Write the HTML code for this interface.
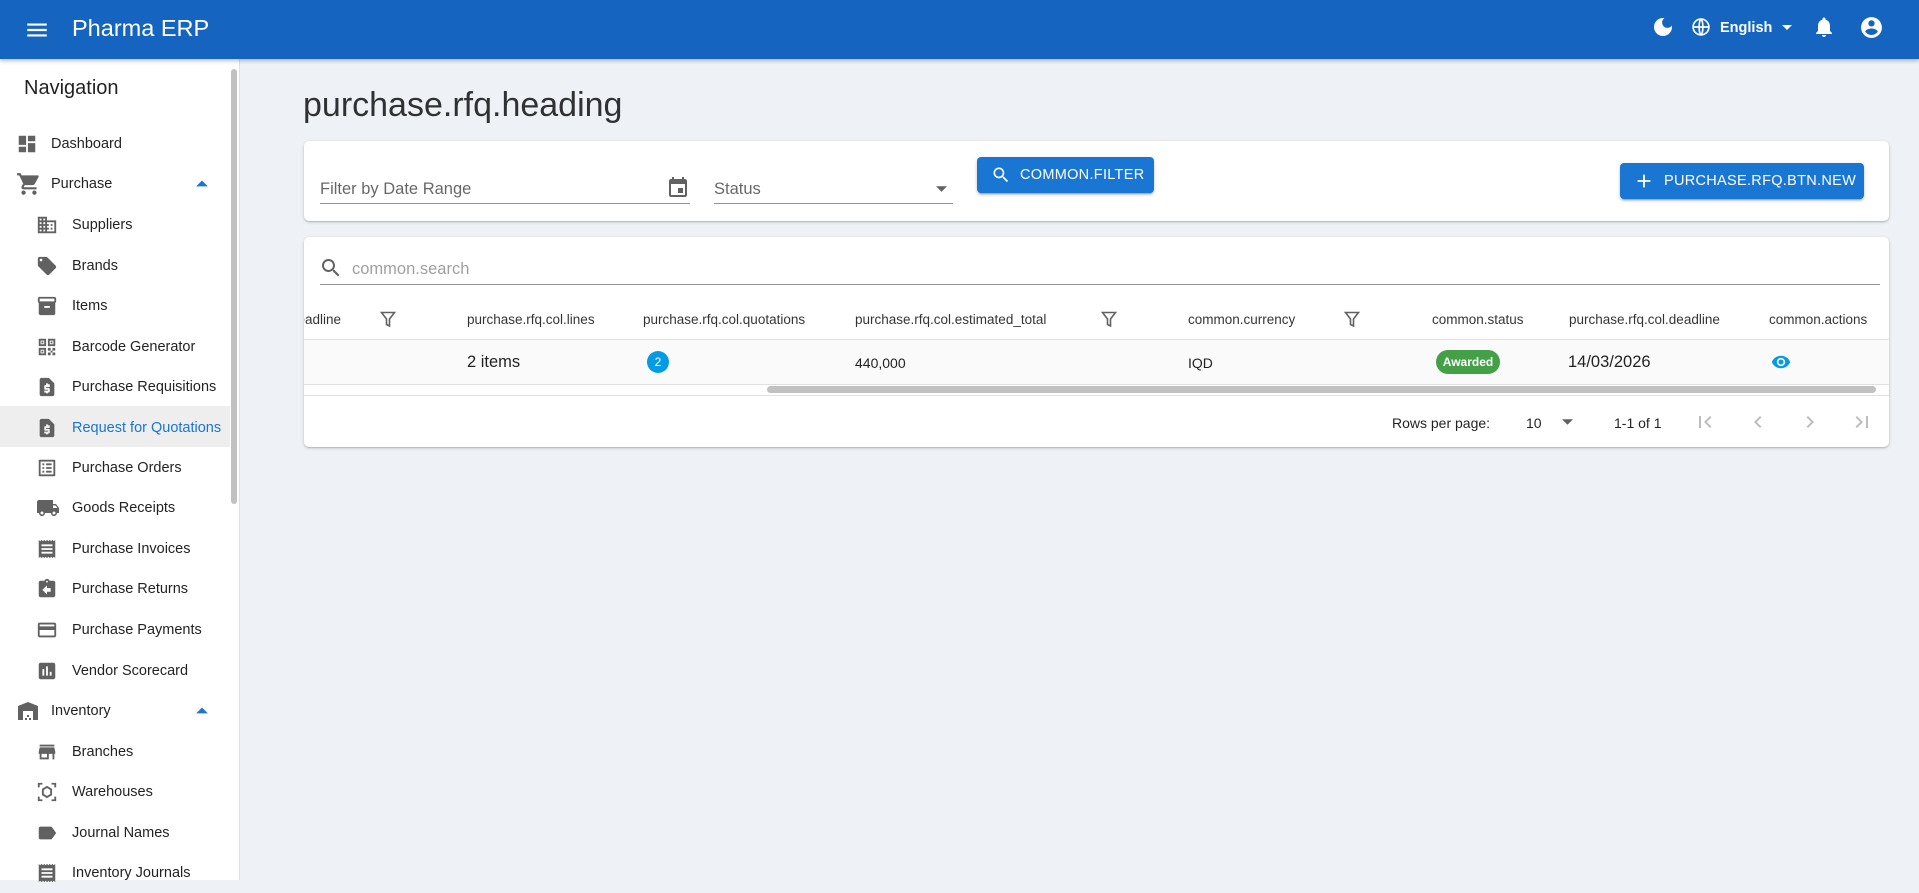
<!DOCTYPE html>
<html><head><meta charset="utf-8">
<style>
*{box-sizing:border-box;margin:0;padding:0}
body{width:1919px;height:880px;overflow:hidden;background:#eef2f7;font-family:"Liberation Sans",Arial,sans-serif;color:rgba(0,0,0,.87);position:relative}
.abs{position:absolute}
svg{display:block}
.bar{left:0;top:0;width:1919px;height:59px;background:#1565c0;box-shadow:0 2px 4px rgba(0,0,0,.25);z-index:5}
.side{left:0;top:59px;width:240px;height:821px;background:#fff;border-right:1px solid #e0e0e0}
.nav{position:absolute;left:0;width:230px;height:40px;display:flex;align-items:center;font-size:14.5px;color:rgba(0,0,0,.87)}
.nav svg{position:absolute;fill:#616161}
.nav span{top:12px}
.nav.top svg{left:16px}.nav.top span{position:absolute;left:51px}
.nav.sub svg{left:36px}.nav.sub span{position:absolute;left:72px}
.card{background:#fff;border-radius:5px;box-shadow:0 1px 3px rgba(0,0,0,.2),0 1px 1px rgba(0,0,0,.12)}
.th{font-size:13.5px;color:rgba(0,0,0,.8);top:312px;white-space:nowrap}
.btn{background:#1976d2;color:#fff;border-radius:4px;box-shadow:0 3px 1px -2px rgba(0,0,0,.2),0 2px 2px rgba(0,0,0,.14),0 1px 5px rgba(0,0,0,.12);font-size:14.5px;font-weight:500;letter-spacing:.3px;display:flex;align-items:center}
</style></head><body>

<div class="abs bar">
  <svg class="abs" style="left:24px;top:17px" width="26" height="26" viewBox="0 0 24 24" fill="#fff"><path d="M3 18h18v-2H3v2zm0-5h18v-2H3v2zm0-7v2h18V6H3z"/></svg>
  <div class="abs" style="left:72px;top:15px;font-size:23.5px;color:#fff">Pharma ERP</div>
  <svg class="abs" style="left:1651px;top:15px" width="24" height="24" viewBox="0 0 24 24" fill="#fff"><path d="M12 3c-4.97 0-9 4.03-9 9s4.03 9 9 9 9-4.030 9-9c0-.46-.04-.92-.1-1.36-.98 1.37-2.58 2.26-4.4 2.26-2.98 0-5.4-2.42-5.4-5.4 0-1.81.89-3.42 2.26-4.4-.44-.06-.9-.1-1.36-.1z"/></svg>
  <svg class="abs" style="left:1691px;top:17px" width="20" height="20" viewBox="0 0 24 24" fill="none" stroke="#fff" stroke-width="2"><circle cx="12" cy="12" r="9.5"/><path d="M2.5 12h19M12 2.5c3 3 3 16 0 19M12 2.5c-3 3-3 16 0 19"/></svg>
  <div class="abs" style="left:1720px;top:20px;font-size:14.5px;color:#fff;font-weight:bold">English</div>
  <svg class="abs" style="left:1778px;top:15px" width="18" height="24" viewBox="0 0 12 24" fill="#fff"><path d="M1 10l5 5 5-5z"/></svg>
  <svg class="abs" style="left:1812px;top:15px" width="24" height="24" viewBox="0 0 24 24" fill="#fff"><path d="M12 22c1.1 0 2-.9 2-2h-4c0 1.1.89 2 2 2zm6-6v-5c0-3.07-1.64-5.64-4.5-6.32V4c0-.83-.67-1.5-1.5-1.5s-1.5.67-1.5 1.5v.68C7.630 5.36 6 7.92 6 11v5l-2 2v1h16v-1l-2-2z"/></svg>
  <svg class="abs" style="left:1859px;top:15px" width="25" height="25" viewBox="0 0 24 24" fill="#fff"><path d="M12 2C6.48 2 2 6.48 2 12s4.48 10 10 10 10-4.48 10-10S17.52 2 12 2zm0 3c1.66 0 3 1.34 3 3s-1.34 3-3 3-3-1.34-3-3 1.34-3 3-3zm0 14.2c-2.5 0-4.71-1.28-6-3.22.03-1.99 4-3.08 6-3.08 1.99 0 5.97 1.09 6 3.08-1.29 1.94-3.5 3.22-6 3.22z"/></svg>
</div>

<div class="abs side">
  <div class="abs" style="left:24px;top:18px;font-size:20px">Navigation</div>
  <div class="abs" style="left:231px;top:10px;width:6px;height:435px;background:#c1c1c1;border-radius:3px"></div>
  <div class="abs" style="left:0;top:347px;width:230px;height:41px;background:#eeeeee"></div>
</div>

<div class="abs" style="left:0;top:61px;width:240px;height:819px">
 <div class="nav top" style="top:63px"><svg width="22" height="22" viewBox="0 0 24 24"><path d="M3 13h8V3H3v10zm0 8h8v-6H3v6zm10 0h8V11h-8v10zm0-18v6h8V3h-8z"/></svg><span>Dashboard</span></div>
 <div class="nav top" style="top:103px"><svg width="26" height="26" viewBox="0 0 24 24"><path d="M7 18c-1.1 0-1.99.9-1.99 2S5.9 22 7 22s2-.9 2-2-.9-2-2-2zM1 2v2h2l3.6 7.59-1.35 2.45c-.16.28-.25.61-.25.96 0 1.1.9 2 2 2h12v-2H7.42c-.14 0-.25-.11-.25-.25l.03-.12.9-1.63h7.45c.75 0 1.41-.41 1.75-1.03l3.58-6.49A1 1 0 0020 4H5.21l-.94-2H1zm16 16c-1.1 0-1.99.9-1.990 2s.89 2 1.99 2 2-.9 2-2-.9-2-2-2z"/></svg><span>Purchase</span><svg style="left:195px" width="14" height="14" viewBox="0 0 12 12"><path fill="#1976d2" d="M1 8l5-5 5 5z"/></svg></div>
 <div class="nav sub" style="top:144px"><svg width="22" height="22" viewBox="0 0 24 24"><path d="M12 7V3H2v18h20V7H12zM6 19H4v-2h2v2zm0-4H4v-2h2v2zm0-4H4V9h2v2zm0-4H4V5h2v2zm4 12H8v-2h2v2zm0-4H8v-2h2v2zm0-4H8V9h2v2zm0-4H8V5h2v2zm10 12h-8v-2h2v-2h-2v-2h2v-2h-2V9h8v10zm-2-8h-2v2h2v-2zm0 4h-2v2h2v-2z"/></svg><span>Suppliers</span></div>
 <div class="nav sub" style="top:185px"><svg width="22" height="22" viewBox="0 0 24 24"><path d="M21.41 11.58l-9-9C12.05 2.22 11.55 2 11 2H4c-1.1 0-2 .9-2 2v7c0 .55.22 1.05.59 1.42l9 9c.36.36.86.58 1.41.58.55 0 1.05-.22 1.41-.59l7-7c.37-.36.59-.86.59-1.41 0-.55-.23-1.06-.59-1.42zM5.5 7C4.67 7 4 6.33 4 5.5S4.67 4 5.5 4 7 4.67 7 5.5 6.33 7 5.5 7z"/></svg><span>Brands</span></div>
 <div class="nav sub" style="top:225px"><svg width="22" height="22" viewBox="0 0 24 24"><path d="M20 2H4c-1 0-2 .9-2 2v3.01c0 .72.43 1.34 1 1.69V20c0 1.1 1.1 2 2 2h14c.9 0 2-.9 2-2V8.7c.57-.35 1-.97 1-1.69V4c0-1.1-1-2-2-2zm-5 12H9v-2h6v2zm5-7H4V4l16-.02V7z"/></svg><span>Items</span></div>
 <div class="nav sub" style="top:266px"><svg width="22" height="22" viewBox="0 0 24 24"><path d="M3 3h8v8H3zm2 2v4h4V5zM13 3h8v8h-8zm2 2v4h4V5zM3 13h8v8H3zm2 2v4h4v-4zM13 13h3v3h-3zm5 0h3v3h-3zm-5 5h3v3h-3zm5 0h3v3h-3zm-2-2h2v2h-2zM6 6h2v2H6zm10 0h2v2h-2zM6 16h2v2H6z"/></svg><span>Barcode Generator</span></div>
 <div class="nav sub" style="top:306px"><svg width="22" height="22" viewBox="0 0 24 24"><path d="M14 2H6c-1.1 0-1.99.9-1.99 2L4 20c0 1.1.89 2 1.99 2H18c1.1 0 2-.9 2-2V8l-6-6zm1 10h-4v1h3c.55 0 1 .45 1 1v3c0 .55-.45 1-1 1h-1v1h-2v-1H9v-2h4v-1h-3c-.55 0-1-.45-1-1v-3c0-.55.45-1 1-1h1V8h2v1h2v2z"/></svg><span>Purchase Requisitions</span></div>
 <div class="nav sub" style="top:347px"><svg width="22" height="22" viewBox="0 0 24 24"><path d="M14 2H6c-1.1 0-1.99.9-1.99 2L4 20c0 1.1.89 2 1.99 2H18c1.1 0 2-.9 2-2V8l-6-6zm1 10h-4v1h3c.55 0 1 .45 1 1v3c0 .55-.45 1-1 1h-1v1h-2v-1H9v-2h4v-1h-3c-.55 0-1-.45-1-1v-3c0-.55.45-1 1-1h1V8h2v1h2v2z"/></svg><span style="color:#1976d2">Request for Quotations</span></div>
 <div class="nav sub" style="top:387px"><svg width="22" height="22" viewBox="0 0 24 24"><path d="M19 5v14H5V5h14m1.1-2H3.9c-.5 0-.9.4-.9.9v16.2c0 .4.4.9.9.9h16.2c.4 0 .9-.5.9-.9V3.9c0-.5-.5-.9-.9-.9zM11 7h6v2h-6V7zm0 4h6v2h-6v-2zm0 4h6v2h-6zM7 7h2v2H7zm0 4h2v2H7zm0 4h2v2H7z"/></svg><span>Purchase Orders</span></div>
 <div class="nav sub" style="top:427px"><svg width="24" height="24" viewBox="0 0 24 24"><path d="M20 8h-3V4H3c-1.1 0-2 .9-2 2v11h2c0 1.66 1.34 3 3 3s3-1.34 3-3h6c0 1.66 1.34 3 3 3s3-1.34 3-3h2v-5l-3-4zM6 18.5c-.83 0-1.5-.67-1.5-1.5s.67-1.5 1.5-1.5 1.5.67 1.5 1.5-.67 1.5-1.5 1.5zm13.5-9l1.96 2.5H17V9.5h2.5zm-1.5 9c-.83 0-1.5-.67-1.5-1.5s.67-1.5 1.5-1.5 1.5.67 1.5 1.5-.67 1.5-1.5 1.5z"/></svg><span>Goods Receipts</span></div>
 <div class="nav sub" style="top:468px"><svg width="22" height="22" viewBox="0 0 24 24"><path d="M18 17H6v-2h12v2zm0-4H6v-2h12v2zm0-4H6V7h12v2zM3 22l1.5-1.5L6 22l1.5-1.5L9 22l1.5-1.5L12 22l1.5-1.5L15 22l1.5-1.5L18 22l1.5-1.5L21 22V2l-1.5 1.5L18 2l-1.5 1.5L15 2l-1.5 1.5L12 2l-1.5 1.5L9 2 7.5 3.5 6 2 4.5 3.5 3 2v20z"/></svg><span>Purchase Invoices</span></div>
 <div class="nav sub" style="top:508px"><svg width="22" height="22" viewBox="0 0 24 24"><path d="M19 3h-4.18C14.4 1.84 13.3 1 12 1c-1.3 0-2.4.84-2.82 2H5c-1.1 0-2 .9-2 2v14c0 1.1.9 2 2 2h14c1.1 0 2-.9 2-2V5c0-1.1-.9-2-2-2zm-7 0c.55 0 1 .45 1 1s-.45 1-1 1-1-.45-1-1 .45-1 1-1zm4 12h-4v3l-5-5 5-5v3h4v4z"/></svg><span>Purchase Returns</span></div>
 <div class="nav sub" style="top:549px"><svg width="22" height="22" viewBox="0 0 24 24"><path d="M20 4H4c-1.11 0-1.99.89-1.99 2L2 18c0 1.11.89 2 2 2h16c1.11 0 2-.89 2-2V6c0-1.11-.89-2-2-2zm0 14H4v-6h16v6zm0-10H4V6h16v2z"/></svg><span>Purchase Payments</span></div>
 <div class="nav sub" style="top:590px"><svg width="22" height="22" viewBox="0 0 24 24"><path d="M19 3H5c-1.1 0-2 .9-2 2v14c0 1.1.9 2 2 2h14c1.1 0 2-.9 2-2V5c0-1.1-.9-2-2-2zM9 17H7v-7h2v7zm4 0h-2V7h2v10zm4 0h-2v-4h2v4z"/></svg><span>Vendor Scorecard</span></div>
 <div class="nav top" style="top:630px"><svg width="24" height="24" viewBox="0 0 24 24"><path d="M22 21V7L12 3 2 7v14h5v-9h10v9h5zm-11-2H9v2h2v-2zm2-3h-2v2h2v-2zm2 3h-2v2h2v-2z"/></svg><span>Inventory</span><svg style="left:195px" width="14" height="14" viewBox="0 0 12 12"><path fill="#1976d2" d="M1 8l5-5 5 5z"/></svg></div>
 <div class="nav sub" style="top:671px"><svg width="22" height="22" viewBox="0 0 24 24"><path d="M20 4H4v2h16V4zm1 10v-2l-1-5H4l-1 5v2h1v6h10v-6h4v6h2v-6h1zm-9 4H6v-4h6v4z"/></svg><span>Branches</span></div>
 <div class="nav sub" style="top:711px"><svg width="22" height="22" viewBox="0 0 24 24" style="fill:none;stroke:#616161;stroke-width:2"><path d="M3 7V3h4M17 3h4v4M21 17v4h-4M7 21H3v-4"/><path d="M12 6.5l4.5 2.7v5.6L12 17.5l-4.5-2.7V9.2z"/></svg><span>Warehouses</span></div>
 <div class="nav sub" style="top:752px"><svg width="22" height="22" viewBox="0 0 24 24"><path d="M17.63 5.84C17.27 5.33 16.67 5 16 5L5 5.01C3.9 5.01 3 5.9 3 7v10c0 1.1.9 1.99 2 1.99L16 19c.67 0 1.27-.33 1.63-.84L22 12l-4.37-6.16z"/></svg><span>Journal Names</span></div>
 <div class="nav sub" style="top:792px"><svg width="22" height="22" viewBox="0 0 24 24"><path d="M18 17H6v-2h12v2zm0-4H6v-2h12v2zm0-4H6V7h12v2zM3 22l1.5-1.5L6 22l1.5-1.5L9 22l1.5-1.5L12 22l1.5-1.5L15 22l1.5-1.5L18 22l1.5-1.5L21 22V2l-1.5 1.5L18 2l-1.5 1.5L15 2l-1.5 1.5L12 2l-1.5 1.5L9 2 7.5 3.5 6 2 4.5 3.5 3 2v20z"/></svg><span>Inventory Journals</span></div>
</div>

<div class="abs" style="left:303px;top:86px;font-size:34px;color:rgba(0,0,0,.8)">purchase.rfq.heading</div>

<!-- filter card -->
<div class="abs card" style="left:304px;top:141px;width:1585px;height:80px"></div>
<div class="abs" style="left:320px;top:180px;font-size:16.5px;color:rgba(0,0,0,.6)">Filter by Date Range</div>
<svg class="abs" style="left:666px;top:176px" width="24" height="24" viewBox="0 0 24 24" fill="#616161"><path d="M17 12h-5v5h5v-5zM16 1v2H8V1H6v2H5c-1.11 0-1.99.9-1.99 2L3 19c0 1.1.89 2 2 2h14c1.1 0 2-.9 2-2V5c0-1.1-.9-2-2-2h-1V1h-2zm3 18H5V8h14v11z"/></svg>
<div class="abs" style="left:320px;top:203px;width:370px;height:1px;background:#949494"></div>
<div class="abs" style="left:714px;top:180px;font-size:16.5px;color:rgba(0,0,0,.6)">Status</div>
<svg class="abs" style="left:936px;top:186px" width="11" height="7" viewBox="0 0 10 6" fill="#616161"><path d="M0 0l5 5 5-5z"/></svg>
<div class="abs" style="left:714px;top:203px;width:239px;height:1px;background:#949494"></div>
<div class="abs btn" style="left:977px;top:157px;width:177px;height:36px">
 <svg style="margin-left:14px" width="20" height="20" viewBox="0 0 24 24" fill="#fff"><path d="M15.5 14h-.79l-.28-.27C15.41 12.59 16 11.11 16 9.5 16 5.91 13.09 3 9.5 3S3 5.91 3 9.5 5.91 16 9.5 16c1.61 0 3.09-.59 4.23-1.570l.27.28v.79l5 4.99L20.49 19l-4.99-5zm-6 0C7.01 14 5 11.99 5 9.5S7.01 5 9.5 5 14 7.01 14 9.5 11.99 14 9.5 14z"/></svg>
 <span style="margin-left:9px">COMMON.FILTER</span></div>
<div class="abs btn" style="left:1620px;top:163px;width:244px;height:36px">
 <svg style="margin-left:13px" width="22" height="22" viewBox="0 0 24 24" fill="#fff"><path d="M19 13h-6v6h-2v-6H5v-2h6V5h2v6h6v2z"/></svg>
 <span style="margin-left:9px">PURCHASE.RFQ.BTN.NEW</span></div>

<!-- table card -->
<div class="abs card" style="left:304px;top:237px;width:1585px;height:210px;overflow:hidden">
 <div class="abs" style="left:0;top:102px;width:1585px;height:1px;background:#e0e0e0"></div>
 <div class="abs" style="left:0;top:103px;width:1585px;height:45px;background:#fafafa"></div>
 <div class="abs" style="left:0;top:147px;width:1585px;height:1px;background:#e0e0e0"></div>
 <div class="abs" style="left:463px;top:149px;width:1109px;height:7px;background:#c1c1c1;border-radius:4px"></div>
 <div class="abs" style="left:0;top:158px;width:1585px;height:1px;background:#e0e0e0"></div>
 <div class="abs" style="left:-14px;top:75px;font-size:13.5px;color:rgba(0,0,0,.8)">deadline</div>
</div>
<svg class="abs" style="left:319px;top:256px" width="24" height="24" viewBox="0 0 24 24" fill="#616161"><path d="M15.5 14h-.79l-.28-.27C15.41 12.59 16 11.11 16 9.5 16 5.91 13.09 3 9.5 3S3 5.91 3 9.5 5.91 16 9.5 16c1.61 0 3.09-.59 4.23-1.57l.27.28v.79l5 4.99L20.49 19l-4.99-5zm-6 0C7.01 14 5 11.990 5 9.5S7.01 5 9.5 5 14 7.01 14 9.5 11.99 14 9.5 14z"/></svg>
<div class="abs" style="left:352px;top:260px;font-size:16.5px;color:rgba(0,0,0,.38)">common.search</div>
<div class="abs" style="left:320px;top:284px;width:1560px;height:1px;background:#949494"></div>

<div class="abs th" style="left:467px">purchase.rfq.col.lines</div>
<div class="abs th" style="left:643px">purchase.rfq.col.quotations</div>
<div class="abs th" style="left:855px">purchase.rfq.col.estimated_total</div>
<div class="abs th" style="left:1188px">common.currency</div>
<div class="abs th" style="left:1432px">common.status</div>
<div class="abs th" style="left:1569px">purchase.rfq.col.deadline</div>
<div class="abs th" style="left:1769px">common.actions</div>
<svg class="abs" style="left:380px;top:311px" width="16" height="17" viewBox="0 0 16 17" fill="none" stroke="#616161" stroke-width="1.6"><path d="M1.5 1.5h13L9.5 8v7l-3-1.5V8z"/></svg>
<svg class="abs" style="left:1101px;top:311px" width="16" height="17" viewBox="0 0 16 17" fill="none" stroke="#616161" stroke-width="1.6"><path d="M1.5 1.5h13L9.5 8v7l-3-1.5V8z"/></svg>
<svg class="abs" style="left:1344px;top:311px" width="16" height="17" viewBox="0 0 16 17" fill="none" stroke="#616161" stroke-width="1.6"><path d="M1.5 1.5h13L9.5 8v7l-3-1.5V8z"/></svg>

<div class="abs" style="left:467px;top:353px;font-size:16.5px">2 items</div>
<div class="abs" style="left:647px;top:351px;width:22px;height:22px;border-radius:50%;background:#039be5;color:#fff;font-size:12px;text-align:center;line-height:22px">2</div>
<div class="abs" style="left:855px;top:355px;font-size:14px">440,000</div>
<div class="abs" style="left:1188px;top:355px;font-size:14px">IQD</div>
<div class="abs" style="left:1436px;top:350px;width:64px;height:24px;border-radius:12px;background:#43a047;color:#fff;font-size:12px;font-weight:bold;text-align:center;line-height:24px">Awarded</div>
<div class="abs" style="left:1568px;top:353px;font-size:16.5px">14/03/2026</div>
<svg class="abs" style="left:1771px;top:352px" width="20" height="20" viewBox="0 0 24 24" fill="#039be5"><path d="M12 4.5C7 4.5 2.73 7.61 1 12c1.73 4.39 6 7.5 11 7.5s9.27-3.11 11-7.5c-1.73-4.39-6-7.5-11-7.5zM12 17c-2.76 0-5-2.24-5-5s2.24-5 5-5 5 2.24 5 5-2.24 5-5 5zm0-8c-1.66 0-3 1.34-3 3s1.34 3 3 3 3-1.34 3-3-1.34-3-3-3z"/></svg>

<div class="abs" style="left:1392px;top:415px;font-size:14px">Rows per page:</div>
<div class="abs" style="left:1526px;top:415px;font-size:14px">10</div>
<svg class="abs" style="left:1562px;top:419px" width="11" height="7" viewBox="0 0 10 6" fill="#616161"><path d="M0 0l5 5 5-5z"/></svg>
<div class="abs" style="left:1614px;top:415px;font-size:14px">1-1 of 1</div>
<svg class="abs" style="left:1693px;top:410px" width="24" height="24" viewBox="0 0 24 24" fill="#bdbdbd"><path d="M18.41 16.59L13.82 12l4.59-4.59L17 6l-6 6 6 6zM6 6h2v12H6z"/></svg>
<svg class="abs" style="left:1746px;top:410px" width="24" height="24" viewBox="0 0 24 24" fill="#bdbdbd"><path d="M15.41 7.41L14 6l-6 6 6 6 1.41-1.41L10.83 12z"/></svg>
<svg class="abs" style="left:1798px;top:410px" width="24" height="24" viewBox="0 0 24 24" fill="#bdbdbd"><path d="M10 6L8.59 7.41 13.17 12l-4.58 4.59L10 18l6-6z"/></svg>
<svg class="abs" style="left:1850px;top:410px" width="24" height="24" viewBox="0 0 24 24" fill="#bdbdbd"><path d="M5.59 7.41L10.18 12l-4.59 4.59L7 18l6-6-6-6zM16 6h2v12h-2z"/></svg>
</body></html>
